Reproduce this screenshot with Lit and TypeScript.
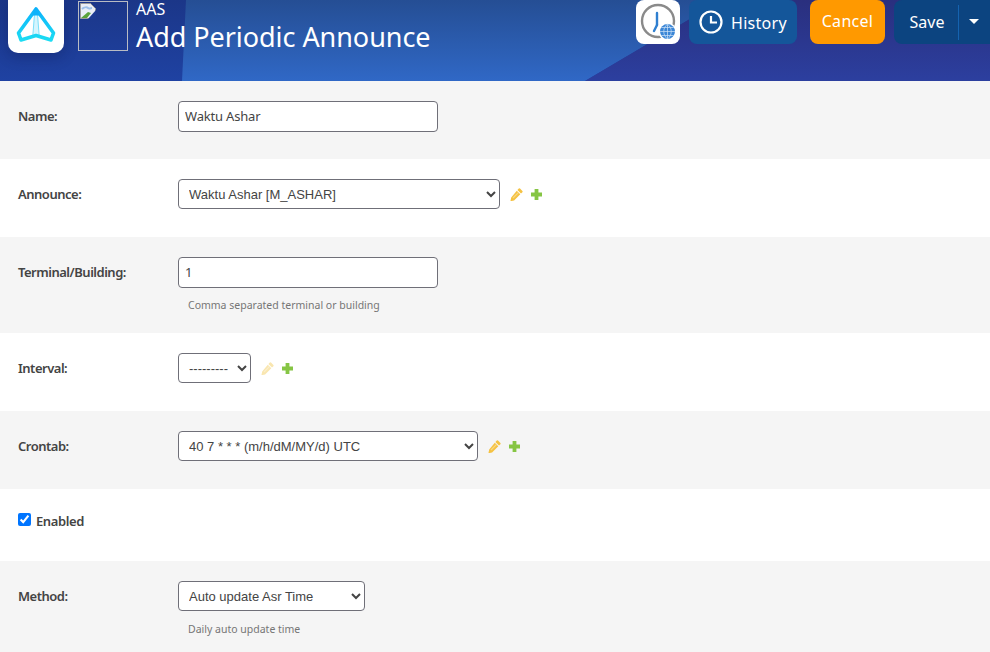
import { LitElement, html, css, svg } from "lit";
import { customElement } from "lit/decorators.js";

const pencil = svg`<path d="M10 .6l2.400 2.400a.9.9 0 0 1 0 1.200L11 5.600 7.400 2 8.800 .6a.9.9 0 0 1 1.200 0zM6.800 2.700l3.500 3.500-6.200 6.200-3.700.9.800-3.800z" fill="currentColor"/><path d="M3 10 8.300 4.700" stroke="#fff" stroke-opacity=".35" stroke-width="1.200"/>`;

@customElement("app-root")
export class AppRoot extends LitElement {
  static styles = css`
    :host { display: block; width: 990px; height: 652px; overflow: hidden; background: #fff; font-family: "Noto Sans", "Open Sans", sans-serif; color: #444; }
    * { box-sizing: border-box; }
    .header { position: relative; height: 81px; display: flex; align-items: flex-start; padding-left: 8px; overflow: hidden;
      background: linear-gradient(180deg, #1b3688 0%, #1f42a2 100%); color: #fff; }
    .header::before { content: ""; position: absolute; inset: 0; background: linear-gradient(180deg, #254e94 0%, #3068c6 100%);
      clip-path: polygon(186px 0, 182px 81px, 585px 81px, 722px 0); }
    .header::after { content: ""; position: absolute; inset: 0; background: linear-gradient(180deg, #2a2f7e 0%, #2c3f9f 100%);
      clip-path: polygon(722px 0, 585px 81px, 990px 81px, 990px 0); }
    .header > * { position: relative; z-index: 1; }
    .logo { width: 56px; height: 53px; background: #fff; border-radius: 0 0 10px 10px; box-shadow: 0 4px 14px rgba(10,20,70,.3); display: flex; }
    .broken { width: 50px; height: 50px; margin: 1px 0 0 14px; border: 1px solid #b9bcc4; display: block; padding: 1px; }
    .broken svg { display: block; }
    .titles { margin-left: 8px; display: flex; flex-direction: column; }
    .sub { font-size: 16px; line-height: 19px; }
    .title { font-size: 27px; line-height: 36px; letter-spacing: -.05px; }
    .spacer { flex: 1; }
    .tile { width: 44px; height: 44px; background: #fff; border-radius: 8px; margin-right: 9px; }
    .tile svg { display: block; }
    .btn { height: 44px; border-radius: 8px; display: flex; align-items: center; justify-content: center; font-size: 16px; letter-spacing: .3px; color: #fff; }
    .history { width: 108px; background: #14569a; gap: 8px; margin-right: 13px; }
    .history span { padding-top: 2px; }
    .cancel { width: 75px; background: #ff9900; margin-right: 9px; padding-bottom: 2px; }
    .save { width: 96px; background: #0c4480; border-radius: 8px 0 0 8px; }
    .save-l { width: 64px; height: 44px; display: flex; align-items: center; justify-content: center; padding-left: 2px; letter-spacing: 0; }
    .save-r { flex: 1; height: 35px; border-left: 1px solid #1563b0; display: flex; align-items: center; justify-content: center; }
    .caret { width: 0; height: 0; border: 5px solid transparent; border-top-color: #fff; border-bottom-width: 0; margin-right: 2px; margin-top: -2px; }
    .row { display: flex; align-items: flex-start; padding: 20px 18px 0; height: 78px; }
    .row.alt { background: #f5f5f5; }
    .row.h96 { height: 96px; }
    .row.h72 { height: 72px; }
    .row.tall { height: 91px; }
    label.lab { width: 160px; font-size: 13px; font-weight: 600; line-height: 30px; color: #444; letter-spacing: -.49px; }
    .field { display: flex; flex-direction: column; }
    .controls { display: flex; align-items: center; }
    input.text { width: 260px; height: 31px; border: 1px solid #6f6f78; border-radius: 4px; background: #fff; padding: 0 6px 2px; font: 13px "Noto Sans", sans-serif; letter-spacing: -.18px; color: #444; outline: none; }
    select { height: 30px; border: 1px solid #6f6f78; border-radius: 4px; background: #fff; padding: 0 6px; font: 13px "Liberation Sans", Arial, sans-serif; color: #444; outline: none; }
    .w322 { width: 322px; } .w73 { width: 73px; } .w300 { width: 300px; } .w187 { width: 187px; }
    .help { font-size: 10.5px; line-height: 15px; color: #757575; margin: 10px 0 0 10px; }
    .help.sel { margin-top: 11px; }
    .icons { display: flex; align-items: center; gap: 8px; margin-left: 10px; color: #f5c242; }
    .icons.dim { color: #f9e6b0; }
    .icons svg { display: block; }
    .check { display: flex; align-items: center; gap: 5px; margin-top: 1px; font-size: 13px; font-weight: 600; line-height: 22px; letter-spacing: -.4px; }
    .check input { width: 13px; height: 13px; margin: -3px 0 0 0; accent-color: #0075ff; }
  `;

  private icons(dim = false) {
    return html`<span class="icons ${dim ? "dim" : ""}">
      <svg width="13" height="13" viewBox="0 0 13 13">${pencil}</svg>
      <svg width="11" height="11" viewBox="0 0 11 11"><path d="M3.600 0h3.800v3.600H11v3.800H7.400V11H3.600V7.400H0V3.600h3.600z" fill="#86c544"/></svg>
    </span>`;
  }

  render() {
    return html`
      <div class="header">
        <div class="logo">
          <svg width="56" height="53" viewBox="0 0 56 53">
            <defs><linearGradient id="k" x1="0" y1="0" x2="0" y2="1"><stop offset="0" stop-color="#0cb2fb"/><stop offset="1" stop-color="#1cdcf3"/></linearGradient></defs>
            <path d="M25 37 L26.500 14 L29.500 14 L31 37 Z" fill="#d4f5fe"/>
            <path d="M26.500 14 L24.800 36 M29.500 14 L31.200 36" stroke="#7adffa" stroke-width="1" fill="none"/>
            <path d="M28 9 L45.500 33 L43 40 L28 35.500 L13 40 L10.500 33 Z" fill="none" stroke="url(#k)" stroke-width="3.600" stroke-linejoin="round"/>
            <path d="M28 8 L24 15.500 L32 15.500 Z" fill="#0cb2fb"/>
          </svg>
        </div>
        <div class="broken">
          <svg width="16" height="16" viewBox="0 0 16 16">
            <path d="M.5.5h10l5 5v10H.5z" fill="#e9eef6" stroke="#9a9a9a"/>
            <path d="M2 6c2-2 5-2 6-1s3 0 4 0" fill="#fff" stroke="#9cc0ea" stroke-width="2"/>
            <path d="M1 15 8 9l3 1-4 5z" fill="#5aa33a"/>
            <path d="M8 16 16 7v9z" fill="#1c3a92"/>
          </svg>
        </div>
        <div class="titles">
          <span class="sub">AAS</span>
          <span class="title">Add Periodic Announce</span>
        </div>
        <span class="spacer"></span>
        <div class="tile">
          <svg width="44" height="44" viewBox="0 0 44 44">
            <circle cx="22" cy="21" r="16" fill="none" stroke="#8a8a8a" stroke-width="2.400"/>
            <path d="M21 13v12" stroke="#2f7fd0" stroke-width="2.400" stroke-linecap="round"/>
            <path d="M21 25l-3 6" stroke="#2f7fd0" stroke-width="2.400" stroke-linecap="round"/>
            <circle cx="31.500" cy="31.500" r="9" fill="#fff"/>
            <circle cx="31.500" cy="31.500" r="7.500" fill="#3b86d6"/>
            <path d="M24 31.500h15M31.500 24v15M25.500 27.500h12M25.500 35.500h12M31.500 24c-5 4-5 11 0 15M31.500 24c5 4 5 11 0 15" stroke="#cfe3f7" stroke-width=".7" fill="none"/>
          </svg>
        </div>
        <div class="btn history">
          <svg width="24" height="24" viewBox="0 0 24 24"><circle cx="12" cy="12" r="10.500" fill="none" stroke="#fff" stroke-width="2.200"/><path d="M12 6v6.500h6" fill="none" stroke="#fff" stroke-width="2.200"/></svg>
          <span>History</span>
        </div>
        <div class="btn cancel">Cancel</div>
        <div class="btn save">
          <span class="save-l">Save</span>
          <span class="save-r"><span class="caret"></span></span>
        </div>
      </div>

      <div class="row alt">
        <label class="lab">Name:</label>
        <input class="text" value="Waktu Ashar" />
      </div>
      <div class="row">
        <label class="lab">Announce:</label>
        <div class="controls">
          <select class="w322"><option>Waktu Ashar [M_ASHAR]</option></select>
          ${this.icons()}
        </div>
      </div>
      <div class="row alt h96">
        <label class="lab">Terminal/Building:</label>
        <div class="field">
          <input class="text" value="1" />
          <span class="help">Comma separated terminal or building</span>
        </div>
      </div>
      <div class="row">
        <label class="lab">Interval:</label>
        <div class="controls">
          <select class="w73"><option>---------</option></select>
          ${this.icons(true)}
        </div>
      </div>
      <div class="row alt">
        <label class="lab">Crontab:</label>
        <div class="controls">
          <select class="w300"><option>40 7 * * * (m/h/dM/MY/d) UTC</option></select>
          ${this.icons()}
        </div>
      </div>
      <div class="row h72">
        <label class="check"><input type="checkbox" checked /> Enabled</label>
      </div>
      <div class="row alt tall">
        <label class="lab">Method:</label>
        <div class="field">
          <select class="w187"><option>Auto update Asr Time</option></select>
          <span class="help sel">Daily auto update time</span>
        </div>
      </div>
    `;
  }
}
